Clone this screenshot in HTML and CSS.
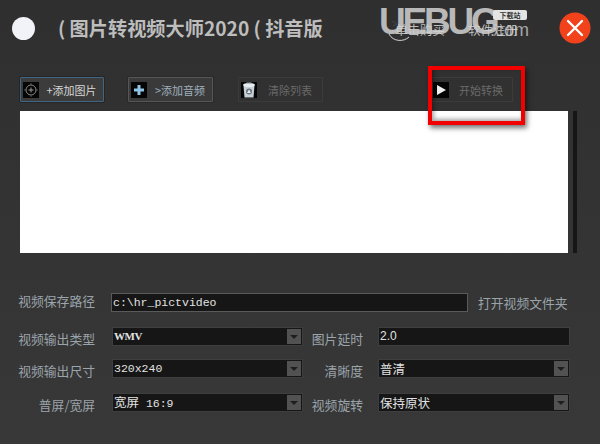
FILE: index.html
```html
<!DOCTYPE html>
<html lang="zh">
<head>
<meta charset="utf-8">
<title>图片转视频大师2020</title>
<link rel="stylesheet" href="styles.css">
</head>
<body>
<div class="app">
  <header class="head">
    <span class="dot"></span>
    <h1 class="title">( 图片转视频大师2020 ( 抖音版</h1>
  </header>

  <div class="toolbar">
    <button class="btn btn-active"><span class="ico"><svg width="16" height="16" viewBox="0 0 16 16"><circle cx="8" cy="8" r="5" fill="none" stroke="#8a8a8a" stroke-width="1"/><path d="M5.500 8h5M8 5.500v5" stroke="#9a9a9a" stroke-width="1"/><path d="M8 1v2M8 13v2M1 8h2M13 8h2" stroke="#555" stroke-width="1"/></svg></span><span class="btn-text">+添加图片</span></button>
    <button class="btn btn-normal"><span class="ico"><svg width="16" height="16" viewBox="0 0 16 16"><path d="M6.500 3h3v3.500H13v3H9.500V13h-3V9.500H3v-3h3.500z" fill="#8fc4e6"/></svg></span><span class="btn-text">&gt;添加音频</span></button>
    <button class="btn btn-off"><span class="ico"><svg width="16" height="16" viewBox="0 0 16 16"><path d="M2.500 3.500h11L12.500 15.500h-9z" fill="#c6d0d6"/><ellipse cx="8" cy="3" rx="6" ry="2" fill="#e6ecef"/><path d="M5.500 .5h5v1.500h-5z" fill="#aeb8bd"/><circle cx="8" cy="9.500" r="3" fill="#6a747a"/><path d="M8 7.500l2 3.500H6z" fill="#e6ecef"/></svg></span><span class="btn-text">清除列表</span></button>
    <button class="btn btn-off btn-start"><span class="ico"><svg width="16" height="16" viewBox="0 0 16 16"><path d="M4 3l9 5-9 5z" fill="#f0f0f0"/></svg></span><span class="btn-text">开始转换</span></button>
  </div>

  <div class="list-row">
    <div class="list"></div>
    <div class="scroll"></div>
  </div>

  <div class="path-row">
    <label class="label">视频保存路径</label>
    <div class="field field-path mono">c:\hr_pictvideo</div>
    <span class="open">打开视频文件夹</span>
  </div>

  <div class="form">
    <label class="label">视频输出类型</label>
    <div class="field combo"><span class="val wmv">WMV</span><span class="arrow"></span></div>
    <label class="label">图片延时</label>
    <div class="field"><span class="val sans">2.0</span></div>

    <label class="label">视频输出尺寸</label>
    <div class="field combo"><span class="val mono">320x240</span><span class="arrow"></span></div>
    <label class="label">清晰度</label>
    <div class="field combo"><span class="val cjk">普清</span><span class="arrow"></span></div>

    <label class="label">普屏/宽屏</label>
    <div class="field combo"><span class="val mono"><span class="cjk">宽屏</span> 16:9</span><span class="arrow"></span></div>
    <label class="label">视频旋转</label>
    <div class="field combo"><span class="val cjk">保持原状</span><span class="arrow"></span></div>
  </div>

  <div class="watermark"><span class="wm-big">UEBUG</span><span class="wm-com">.com</span><span class="wm-tag">下载站</span></div>
  <svg class="wm-arc" width="28" height="24" viewBox="0 0 28 24"><path d="M3 16c4 8 15 8 20 3" fill="none" stroke="#d6d6d6" stroke-width="1"/><path d="M6 3l5 3-4 2" fill="none" stroke="#444" stroke-width="1"/></svg>
  <div class="links"><span>单击购买</span><span>软件注册</span></div>
  <button class="close"><svg width="32" height="32" viewBox="0 0 32 32"><circle cx="16" cy="16" r="15.500" fill="#f2421b"/><path d="M9 9l14 14M23 9L9 23" stroke="#fff" stroke-width="2.400" stroke-linecap="round"/></svg></button>
  <div class="redbox"></div>
</div>
</body>
</html>
```
FILE: styles.css
```css
* { box-sizing: border-box; }
html, body { margin: 0; padding: 0; }
body { background: #343434; font-family: "Noto Sans CJK SC", "Liberation Sans", sans-serif; }
.app { position: relative; width: 600px; height: 444px; overflow: hidden; padding: 0 23px 0 20px; background: linear-gradient(#2f2f2f, #383838); }

.head { display: flex; align-items: center; height: 56px; margin-left: -8px; }
.dot { width: 23px; height: 23px; border-radius: 50%; background: #f2f3f8; flex: none; }
.title { margin: 0 0 0 23px; font-size: 19.200px; font-weight: 700; line-height: 24px; color: #bdbdbd; white-space: nowrap; }

.toolbar { display: flex; margin-top: 21px; height: 25px; }
.btn { display: flex; align-items: center; width: 85px; height: 25px; padding: 0 0 0 2px; margin-right: 25px; font: 11px "Noto Sans CJK SC", sans-serif; border-radius: 1px; background: none; }
.ico { display: block; width: 16px; height: 16px; background: #050505; flex: none; }
.ico svg { display: block; }
.btn-text { flex: 1; text-align: center; padding-left: 1px; white-space: nowrap; }
.btn-active { width: 84px; margin-right: 24px; border: 1px solid #3f6685; box-shadow: 0 0 0 1px #262626; background: #3c3c3c; color: #d8d8d8; }
.btn-normal { border: 1px solid #565656; box-shadow: 0 0 0 1px #2a2a2a; background: #3a3a3a; color: #9fb0bd; }
.btn-off { border: 1px solid #3b3b3b; color: #6a6a6a; }
.btn-start { width: 83px; margin: 0 0 0 82px; }

.list-row { display: flex; height: 142px; margin-top: 9px; }
.list { width: 549px; background: #fff; }
.scroll { width: 4px; margin-left: 5px; background: #161616; }

.label { color: #9ba4ab; font-size: 12.800px; line-height: 18px; text-align: right; white-space: nowrap; }
.field { display: flex; align-items: center; height: 19px; background: #161616; border: 1px solid #4a4a4a; color: #e2e2e2; min-width: 0; }
.mono { font-family: "Liberation Mono", monospace; font-size: 11.500px; }
.cjk { font-family: "Noto Sans CJK SC", sans-serif; font-size: 12.500px; }
.sans { font-family: "Liberation Sans", sans-serif; font-size: 12px; }
.wmv { font-family: "Liberation Serif", serif; font-size: 11px; font-weight: 700; letter-spacing: -0.500px; }

.path-row { display: flex; align-items: center; margin-top: 40px; }
.path-row .label { width: 77px; margin: -3px 0 0 -2px; }
.field-path { width: 357px; margin-left: 16px; padding-left: 1px; border-color: #5a5a5a; }
.open { margin-left: 10px; color: #9ba4ab; font-size: 12.800px; line-height: 18px; white-space: nowrap; }

.form { display: grid; grid-template-columns: 75px 208px 60px 207px; grid-template-rows: 19px 21px 19px; row-gap: 13px; margin-top: 15px; }
.form .label { line-height: 19px; padding-top: 2px; margin-left: -2px; }
.form .label:nth-child(4n+3) { margin-left: 0; }
.form .field { margin-left: 17px; background: #161616; border-color: #3e3e3e; }
.form .field:nth-child(4n) { margin-left: 15px; }
.val { flex: 1; padding-left: 1px; white-space: pre; line-height: 17px; }
.arrow { position: relative; width: 14px; height: 15px; margin-right: 1px; background: #525252; flex: none; }
.arrow::after { content: ""; position: absolute; left: 3px; top: 6px; border: 4px solid transparent; border-top: 4px solid #1e1e1e; border-bottom: 0; }

.watermark { position: absolute; left: 379px; top: 0; width: 150px; height: 50px; color: #b9b9b9; }
.wm-big { position: absolute; left: 0; top: 2px; font: 700 37px/40px "Liberation Sans", sans-serif; letter-spacing: -3.200px; }
.wm-com { position: absolute; left: 111px; top: 18px; font: 400 18px/24px "Liberation Sans", sans-serif; color: #a6a6a6; }
.wm-tag { position: absolute; left: 114px; top: 10px; width: 34px; height: 10px; border-radius: 2px; background: #e4e4e4; color: #333; font: 700 7px/10px "Noto Sans CJK SC", sans-serif; text-align: center; }
.wm-arc { position: absolute; left: 386px; top: 18px; }
.links { position: absolute; left: 395px; top: 21px; display: flex; gap: 23px; color: #d4d4d4; font-size: 12.500px; line-height: 18px; white-space: nowrap; opacity: .85; }
.close { position: absolute; left: 559px; top: 12px; width: 32px; height: 32px; padding: 0; border: 0; background: none; }
.close svg { display: block; }
.redbox { position: absolute; left: 428px; top: 66px; width: 97px; height: 59px; border: 4px solid #f20000; box-shadow: 2px 3px 5px rgba(0,0,0,.55), inset 2px -2px 4px rgba(0,0,0,.35); }
```
